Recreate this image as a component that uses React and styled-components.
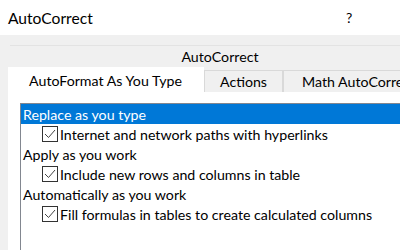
import React from 'react';
import styled, { createGlobalStyle } from 'styled-components';

const GlobalStyle = createGlobalStyle`
  html, body {
    margin: 0;
    padding: 0;
    background: #f0f0f0;
  }
  body {
    font-family: Lato, "Noto Sans", sans-serif;
    color: #000;
  }
`;

const Window = styled.div`
  width: 400px;
  height: 250px;
  overflow: hidden;
  background: #f0f0f0;
  display: flex;
  flex-direction: column;
`;

const TitleBar = styled.div`
  height: 35px;
  flex: none;
  background: #fff;
  display: flex;
  align-items: center;
  padding-left: 8px;
  font-size: 15.6px;
`;

const Title = styled.span`
  flex: 1;
`;

const Help = styled.span`
  width: 54px;
  font-size: 14px;
`;

const Body = styled.div`
  flex: 1;
  padding-left: 8px;
  display: flex;
  flex-direction: column;
`;

const Divider = styled.div`
  margin: 10px 0 0 2px;
  border-top: 1px solid #e3e3e3;
`;

const Heading = styled.div`
  width: 424px;
  height: 21px;
  line-height: 22px;
  text-align: center;
  font-size: 14.2px;
  white-space: nowrap;
`;

const TabStrip = styled.div`
  display: flex;
  align-items: flex-end;
  height: 25px;
  white-space: nowrap;
`;

const Tab = styled.div`
  flex: none;
  box-sizing: border-box;
  height: ${(p) => (p.$active ? '25px' : '22px')};
  width: ${(p) => p.$width}px;
  background: ${(p) => (p.$active ? '#fff' : '#f0f0f0')};
  border: 1px solid ${(p) => (p.$active ? '#fff' : '#d9d9d9')};
  border-bottom: none;
  border-left: ${(p) => (p.$active ? 'none' : '1px solid #d9d9d9')};
  padding-left: ${(p) => p.$pad}px;
  text-align: ${(p) => (p.$pad ? 'left' : 'center')};
  font-size: 14.2px;
  line-height: ${(p) => (p.$active ? '25px' : '21px')};
`;

const Page = styled.div`
  flex: 1;
  background: #fff;
  padding: 11px 0 0 12px;
`;

const ListBox = styled.div`
  height: 100%;
  border-top: 1px solid #828790;
  border-left: 1px solid #828790;
  font-size: 14.2px;
`;

const Row = styled.div`
  height: 20px;
  display: flex;
  align-items: center;
  padding-left: ${(p) => (p.$child ? '21px' : '2px')};
  background: ${(p) => (p.$selected ? '#0078d7' : 'transparent')};
  color: ${(p) => (p.$selected ? '#fff' : '#000')};
  white-space: nowrap;
`;

const Box = styled.span`
  width: 16px;
  height: 16px;
  box-sizing: border-box;
  border: 1px solid #333;
  margin-right: 2px;
  display: flex;
  align-items: center;
  justify-content: center;
  flex: none;
`;

const Check = () => (
  <Box>
    <svg width="14" height="14" viewBox="0 0 14 14">
      <polyline points="2,7 5.5,10.5 12,3" fill="none" stroke="#444" strokeWidth="1" />
    </svg>
  </Box>
);

const rows = [
  { text: 'Replace as you type', selected: true },
  { text: 'Internet and network paths with hyperlinks', child: true },
  { text: 'Apply as you work' },
  { text: 'Include new rows and columns in table', child: true },
  { text: 'Automatically as you work' },
  { text: 'Fill formulas in tables to create calculated columns', child: true },
];

export default function App() {
  return (
    <Window>
      <GlobalStyle />
      <TitleBar>
        <Title>AutoCorrect</Title>
        <Help>?</Help>
      </TitleBar>
      <Body>
        <Divider />
        <Heading>AutoCorrect</Heading>
        <TabStrip>
          <Tab $active $width={196}>AutoFormat As You Type</Tab>
          <Tab $width={79}>Actions</Tab>
          <Tab $width={160} $pad={18}>Math AutoCorrect</Tab>
        </TabStrip>
        <Page>
          <ListBox>
            {rows.map((r) => (
              <Row key={r.text} $selected={r.selected} $child={r.child}>
                {r.child && <Check />}
                {r.text}
              </Row>
            ))}
          </ListBox>
        </Page>
      </Body>
    </Window>
  );
}
